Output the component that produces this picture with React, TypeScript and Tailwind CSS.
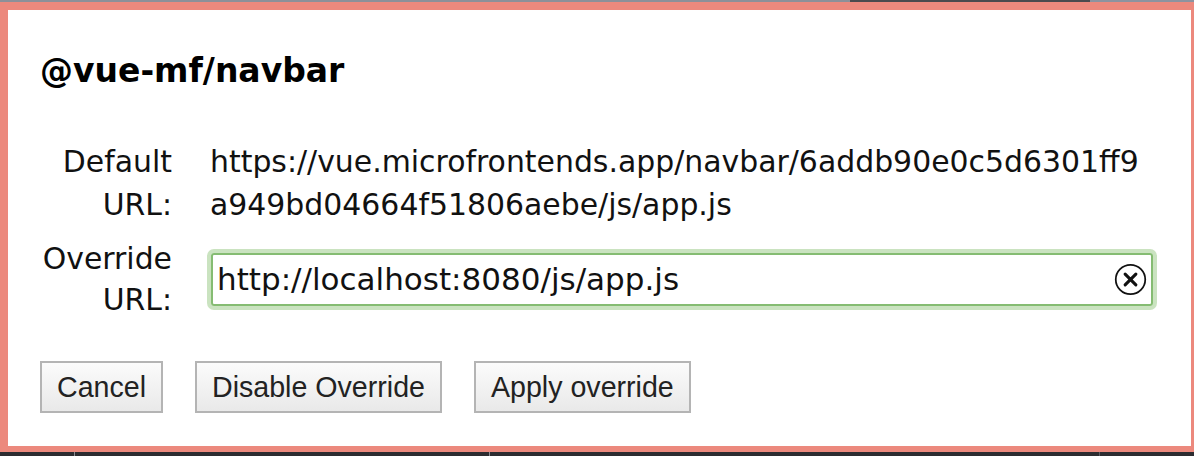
import React from "react";

const bodyFont = { fontFamily: '"DejaVu Sans", sans-serif' };

function ClearIcon() {
  return (
    <svg width="33" height="33" viewBox="0 0 32 32" className="shrink-0">
      <circle cx="16" cy="16" r="14.3" fill="none" stroke="#111" strokeWidth="1.7" />
      <path d="M10.8 10.8 L21.2 21.2 M21.2 10.8 L10.8 21.2" stroke="#111" strokeWidth="3" strokeLinecap="round" />
    </svg>
  );
}

function Button({ children }: { children: React.ReactNode }) {
  return (
    <button className="h-[52px] px-[15px] border-2 border-[#b4b4b4] bg-gradient-to-b from-[#fbfbfb] to-[#e9e9e9] text-[28.6px] leading-none text-[#222] font-['Liberation_Sans',sans-serif]">
      {children}
    </button>
  );
}

export default function App() {
  return (
    <div className="w-[1194px] h-[456px] bg-[#ec897d] flex flex-col overflow-hidden">
      {/* strip of the page behind the dialog */}
      <div className="h-[2px] flex">
        <div className="w-[850px] bg-[#8c9099]" />
        <div className="w-[240px] bg-[#4a4a4e]" />
        <div className="flex-1 bg-[#8c93a0]" />
      </div>

      <div className="flex-1 pl-2 pr-[3px] pt-2 pb-[6px]">
        <div className="h-full bg-white pt-[41px] pl-[32px]" style={bodyFont}>
          <h2 className="text-[33px] leading-[40px] font-bold text-black">@vue-mf/navbar</h2>

          <div className="mt-[49px] grid grid-cols-[132px_950px] gap-x-[35px] gap-y-[12px] text-[29.9px] text-[#111]">
            <div className="text-right leading-[43px] pl-[4px]">
              Default
              <br />
              URL:
            </div>
            <div className="leading-[43px] pl-[3px]">
              <div>https://vue.microfrontends.app/navbar/6addb90e0c5d6301ff9</div>
              <div>a949bd04664f51806aebe/js/app.js</div>
            </div>

            <div className="text-right leading-[41px]">
              Override
              <br />
              URL:
            </div>
            <div className="self-center p-[4px]">
              <div className="h-[53px] flex items-center rounded-[3px] border-2 border-[#85bc72] shadow-[0_0_0_4px_rgba(150,200,130,0.5)] pl-[4px] pr-[4px] text-[31px]">
                <span className="flex-1">http://localhost:8080/js/app.js</span>
                <ClearIcon />
              </div>
            </div>
          </div>

          <div className="mt-[41px] flex gap-[32px]">
            <Button>Cancel</Button>
            <Button>Disable Override</Button>
            <Button>Apply override</Button>
          </div>
        </div>
      </div>

      <div className="h-[4px] flex bg-[#2c2c30]">
        <div className="w-[75px] border-r border-[#8a8a90]" />
        <div className="w-[415px] border-r border-[#8a8a90]" />
        <div className="w-[610px] border-r border-[#5a5a60]" />
      </div>
    </div>
  );
}
